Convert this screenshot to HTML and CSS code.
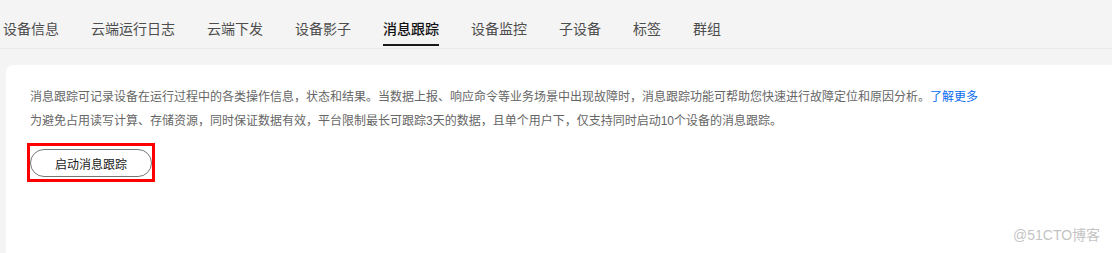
FILE: index.html
```html
<!DOCTYPE html>
<html lang="zh-CN">
<head>
<meta charset="utf-8">
<link rel="stylesheet" href="styles.css">
</head>
<body>
<div class="page">
  <nav class="tabs">
    <span class="tab">设备信息</span>
    <span class="tab">云端运行日志</span>
    <span class="tab">云端下发</span>
    <span class="tab">设备影子</span>
    <span class="tab active">消息跟踪</span>
    <span class="tab">设备监控</span>
    <span class="tab">子设备</span>
    <span class="tab">标签</span>
    <span class="tab">群组</span>
  </nav>
  <section class="card">
    <p class="desc">消息跟踪可记录设备在运行过程中的各类操作信息，状态和结果。当数据上报、响应命令等业务场景中出现故障时，消息跟踪功能可帮助您快速进行故障定位和原因分析。<a class="link">了解更多</a></p>
    <p class="desc">为避免占用读写计算、存储资源，同时保证数据有效，平台限制最长可跟踪3天的数据，且单个用户下，仅支持同时启动10个设备的消息跟踪。</p>
    <div class="highlight"><button class="btn">启动消息跟踪</button></div>
  </section>
  <div class="watermark">@51CTO博客</div>
</div>
</body>
</html>
```
FILE: styles.css
```css
html, body {
  margin: 0;
  padding: 0;
  background: #f4f4f4;
  font-family: "Liberation Sans", Arial, "Noto Sans CJK SC", sans-serif;
}
.page {
  position: relative;
  width: 1112px;
  height: 253px;
  overflow: hidden;
}
.tabs {
  display: flex;
  gap: 32px;
  padding-left: 3px;
  height: 48px;
  border-bottom: 1px solid #e9e9e9;
}
.tab {
  font-size: 14px;
  line-height: 20px;
  padding-top: 19px;
  height: 27px;
  color: #4d4d4d;
  box-sizing: content-box;
}
.tab.active {
  color: #111;
  font-weight: 500;
  height: 25px;
  border-bottom: 2px solid #1a1a1a;
}
.card {
  margin: 16px 0 0 6px;
  width: 1120px;
  height: 200px;
  background: #fff;
  border-top-left-radius: 8px;
  padding: 20px 24px 0 24px;
  box-sizing: border-box;
}
.desc {
  margin: 0;
  font-size: 12px;
  line-height: 24px;
  color: #666;
}
.link {
  color: #0a6cf0;
}
.highlight {
  display: inline-block;
  margin: 10px 0 0 -3px;
  border: 3px solid #f00;
  padding: 3px 0 2px 0;
  line-height: 0;
}
.btn {
  width: 122px;
  height: 28px;
  border: 1px solid #757575;
  border-radius: 14px;
  background: #fff;
  font-family: "Liberation Sans", Arial, "Noto Sans CJK SC", sans-serif;
  font-size: 12px;
  color: #1a1a1a;
  padding: 0;
}
.watermark {
  position: absolute;
  left: 1013px;
  top: 226px;
  font-size: 14px;
  line-height: 18px;
  color: #c4c4c4;
}
```
